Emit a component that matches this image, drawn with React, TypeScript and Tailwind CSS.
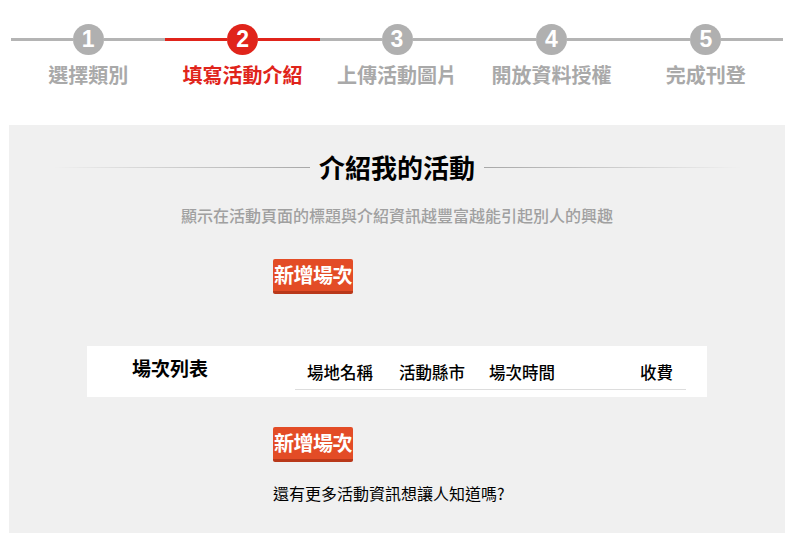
import React from 'react'

const FONT = '"Noto Sans CJK TC", "Noto Sans CJK SC", sans-serif'

const STEPS = ['選擇類別', '填寫活動介紹', '上傳活動圖片', '開放資料授權', '完成刊登']
const ACTIVE = 1

const COLUMNS: { label: string; width: string }[] = [
  { label: '場地名稱', width: 'w-[92px]' },
  { label: '活動縣市', width: 'w-[90px]' },
  { label: '場次時間', width: 'w-[151px]' },
  { label: '收費', width: 'w-[58px]' },
]

function Step({ index, label }: { index: number; label: string }): React.ReactElement {
  const active = index === ACTIVE
  return (
    <div className="flex flex-col items-center">
      <div className="flex items-center w-full">
        <div className={`h-[3px] flex-1 ${active ? 'bg-[#e0241b]' : 'bg-[#b4b4b4]'}`} />
        <div
          className={`w-[31px] h-[31px] rounded-full flex items-center justify-center text-white text-[23px] font-bold leading-none ${active ? 'bg-[#e0241b]' : 'bg-[#b0b0b0]'}`}
          style={{ fontFamily: '"Liberation Sans", Arial, sans-serif' }}
        >
          {index + 1}
        </div>
        <div className={`h-[3px] flex-1 ${active ? 'bg-[#e0241b]' : 'bg-[#b4b4b4]'}`} />
      </div>
      <p className={`mt-[8px] text-[20px] leading-[24px] font-bold ${active ? 'text-[#e0241b]' : 'text-[#a9a9a9]'}`}>
        {label}
      </p>
    </div>
  )
}

function AddButton(): React.ReactElement {
  return (
    <button className="w-[80px] h-[35px] bg-[#e34c26] border-b-[3px] border-[#b9381a] rounded-[2px] text-white text-[20px] font-bold leading-none tracking-[-0.5px]">
      新增場次
    </button>
  )
}

export default function App(): React.ReactElement {
  return (
    <div className="w-[797px] h-[539px] bg-white overflow-hidden" style={{ fontFamily: FONT }}>
      {/* Stepper */}
      <div className="pt-[24px] pl-[11px] pr-[14px] grid grid-cols-5">
        {STEPS.map((s, i) => <Step key={s} index={i} label={s} />)}
      </div>

      {/* Panel */}
      <div className="mt-[38px] ml-[9px] mr-[12px] h-[408px] bg-[#f0f0f0] flex flex-col">
        <div className="pt-[26px] px-[44px] flex items-center">
          <div className="flex-1 h-px bg-gradient-to-r from-transparent to-[#a8a8a8]" />
          <h1 className="mx-[9px] text-[26px] leading-[32px] font-bold text-black">介紹我的活動</h1>
          <div className="flex-1 h-px bg-gradient-to-l from-transparent to-[#a8a8a8]" />
        </div>

        <p className="mt-[22px] text-center text-[16px] leading-[20px] font-medium text-[#a0a0a0]">
          顯示在活動頁面的標題與介紹資訊越豐富越能引起別人的興趣
        </p>

        <div className="mt-[34px] ml-[264px]">
          <AddButton />
        </div>

        {/* Session list */}
        <div className="mt-[52px] ml-[78px] w-[620px] h-[51px] bg-white flex items-start">
          <h2 className="w-[208px] pl-[45px] pt-[10px] text-[19px] leading-[24px] font-bold text-black">場次列表</h2>
          <div className="flex pt-[15px] pb-[6px] border-b border-[#dddddd]">
            {COLUMNS.map((c) => (
              <span key={c.label} className={`${c.width} pl-[12px] text-[16.5px] leading-[22px] font-medium text-black`}>
                {c.label}
              </span>
            ))}
          </div>
        </div>

        <div className="mt-[30px] ml-[264px]">
          <AddButton />
        </div>

        <p className="mt-[21px] ml-[264px] text-[16px] leading-[20px] text-black">
          還有更多活動資訊想讓人知道嗎?
        </p>
      </div>
    </div>
  )
}
